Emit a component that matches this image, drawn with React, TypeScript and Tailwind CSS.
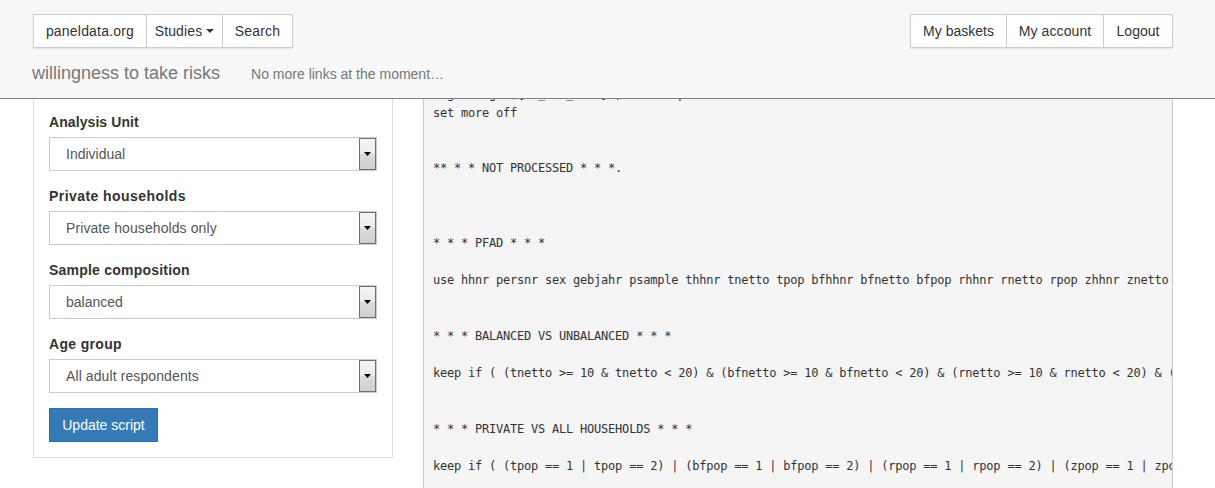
const CODE = `log using "\${MY_LOG_PATH}", text replace
set more off


** * * NOT PROCESSED * * *.



* * * PFAD * * *

use hhnr persnr sex gebjahr psample thhnr tnetto tpop bfhhnr bfnetto bfpop rhhnr rnetto rpop zhhnr znetto zpop


* * * BALANCED VS UNBALANCED * * *

keep if ( (tnetto >= 10 & tnetto < 20) & (bfnetto >= 10 & bfnetto < 20) & (rnetto >= 10 & rnetto < 20) & (znetto >= 10 & znetto < 20) )


* * * PRIVATE VS ALL HOUSEHOLDS * * *

keep if ( (tpop == 1 | tpop == 2) | (bfpop == 1 | bfpop == 2) | (rpop == 1 | rpop == 2) | (zpop == 1 | zpop == 2) )`;

const FIELDS = [
  { label: "Analysis Unit", value: "Individual", lt: "tracking-[0.08px]", vt: "" },
  { label: "Private households", value: "Private households only", lt: "tracking-[0.44px]", vt: "tracking-[0.09px]" },
  { label: "Sample composition", value: "balanced", lt: "tracking-[0.22px]", vt: "" },
  { label: "Age group", value: "All adult respondents", lt: "tracking-[0.33px]", vt: "tracking-[0.1px]" },
];

const LEFT = [
  { t: "paneldata.org", w: "w-[112px]", tr: "tracking-[0.2px]" },
  { t: "Studies", w: "w-[76px]", tr: "tracking-[0.14px]" },
  { t: "Search", w: "w-[70px]", tr: "tracking-[0.15px]" },
];
const RIGHT = [
  { t: "My baskets", w: "w-[95px]", tr: "" },
  { t: "My account", w: "w-[97px]", tr: "tracking-[0.1px]" },
  { t: "Logout", w: "w-[69px]", tr: "" },
];

function NavGroup({ items }: { items: { t: string; w: string; tr: string }[] }) {
  return (
    <div className="flex h-[34px] border border-[#ccc] bg-white shadow-[0_1px_1px_rgba(0,0,0,0.08)]">
      {items.map((it, i) => (
        <a key={it.t} className={`flex items-center justify-center text-[14px] text-[#333] ${it.w} ${it.tr} ${i > 0 ? "border-l border-[#ccc]" : ""}`}>
          {it.t}
          {it.t === "Studies" && (
            <span className="ml-1 inline-block h-0 w-0 border-x-4 border-t-4 border-x-transparent border-t-[#333]" />
          )}
        </a>
      ))}
    </div>
  );
}

function FakeSelect({ label, value, lt, vt }: { label: string; value: string; lt: string; vt: string }) {
  return (
    <div className="mb-[15px]">
      <div className={`mb-[5px] text-[14px] font-bold leading-5 text-[#333] ${lt}`}>{label}</div>
      <div className="flex h-[34px] items-center border border-[#ccc] bg-white pl-4 text-[14px] text-[#555]">
        <span className={`flex-1 ${vt}`}>{value}</span>
        <span className="flex h-[32px] w-[17px] items-center justify-center border border-[#707070] bg-[linear-gradient(to_bottom,#f4f4f4_0%,#ececec_48%,#dcdcdc_50%,#cfcfcf_100%)]">
          <svg width="7" height="4" viewBox="0 0 7 4"><path d="M0 0h7L3.5 4z" fill="#000" /></svg>
        </span>
      </div>
    </div>
  );
}

export default function App() {
  return (
    <div className="h-[488px] overflow-hidden bg-white font-['Liberation_Sans',Arial,sans-serif]">
      <nav className="relative z-10 h-[99px] border-b border-[#808080] bg-[#f8f8f8] px-[33px] pt-[14px]">
        <div className="flex justify-between pr-[9px]">
          <NavGroup items={LEFT} />
          <NavGroup items={RIGHT} />
        </div>
        <div className="mt-[15px] flex items-baseline">
          <span className="-ml-px text-[18px] leading-5 text-[#777]">willingness to take risks</span>
          <span className="ml-[31px] text-[14px] leading-5 text-[#777]">No more links at the moment…</span>
        </div>
      </nav>
      <main className="flex gap-[30px] pl-[33px]">
        <aside className="h-[359px] w-[360px] border-x border-b border-[#ddd] px-[15px] pt-[13px]">
          {FIELDS.map((f) => <FakeSelect key={f.label} {...f} />)}
          <button className="h-[34px] w-[109px] border border-[#2e6da4] bg-[#337ab7] text-[14px] text-white">Update script</button>
        </aside>
        <pre className="-mt-[14px] h-[500px] w-[750px] overflow-hidden border-x border-[#ccc] bg-[#f5f5f5] pl-[9px] font-['DejaVu_Sans_Mono',monospace] text-[12px] leading-[18.6px] tracking-[-0.22px] text-[#333]">{CODE}</pre>
      </main>
    </div>
  );
}
